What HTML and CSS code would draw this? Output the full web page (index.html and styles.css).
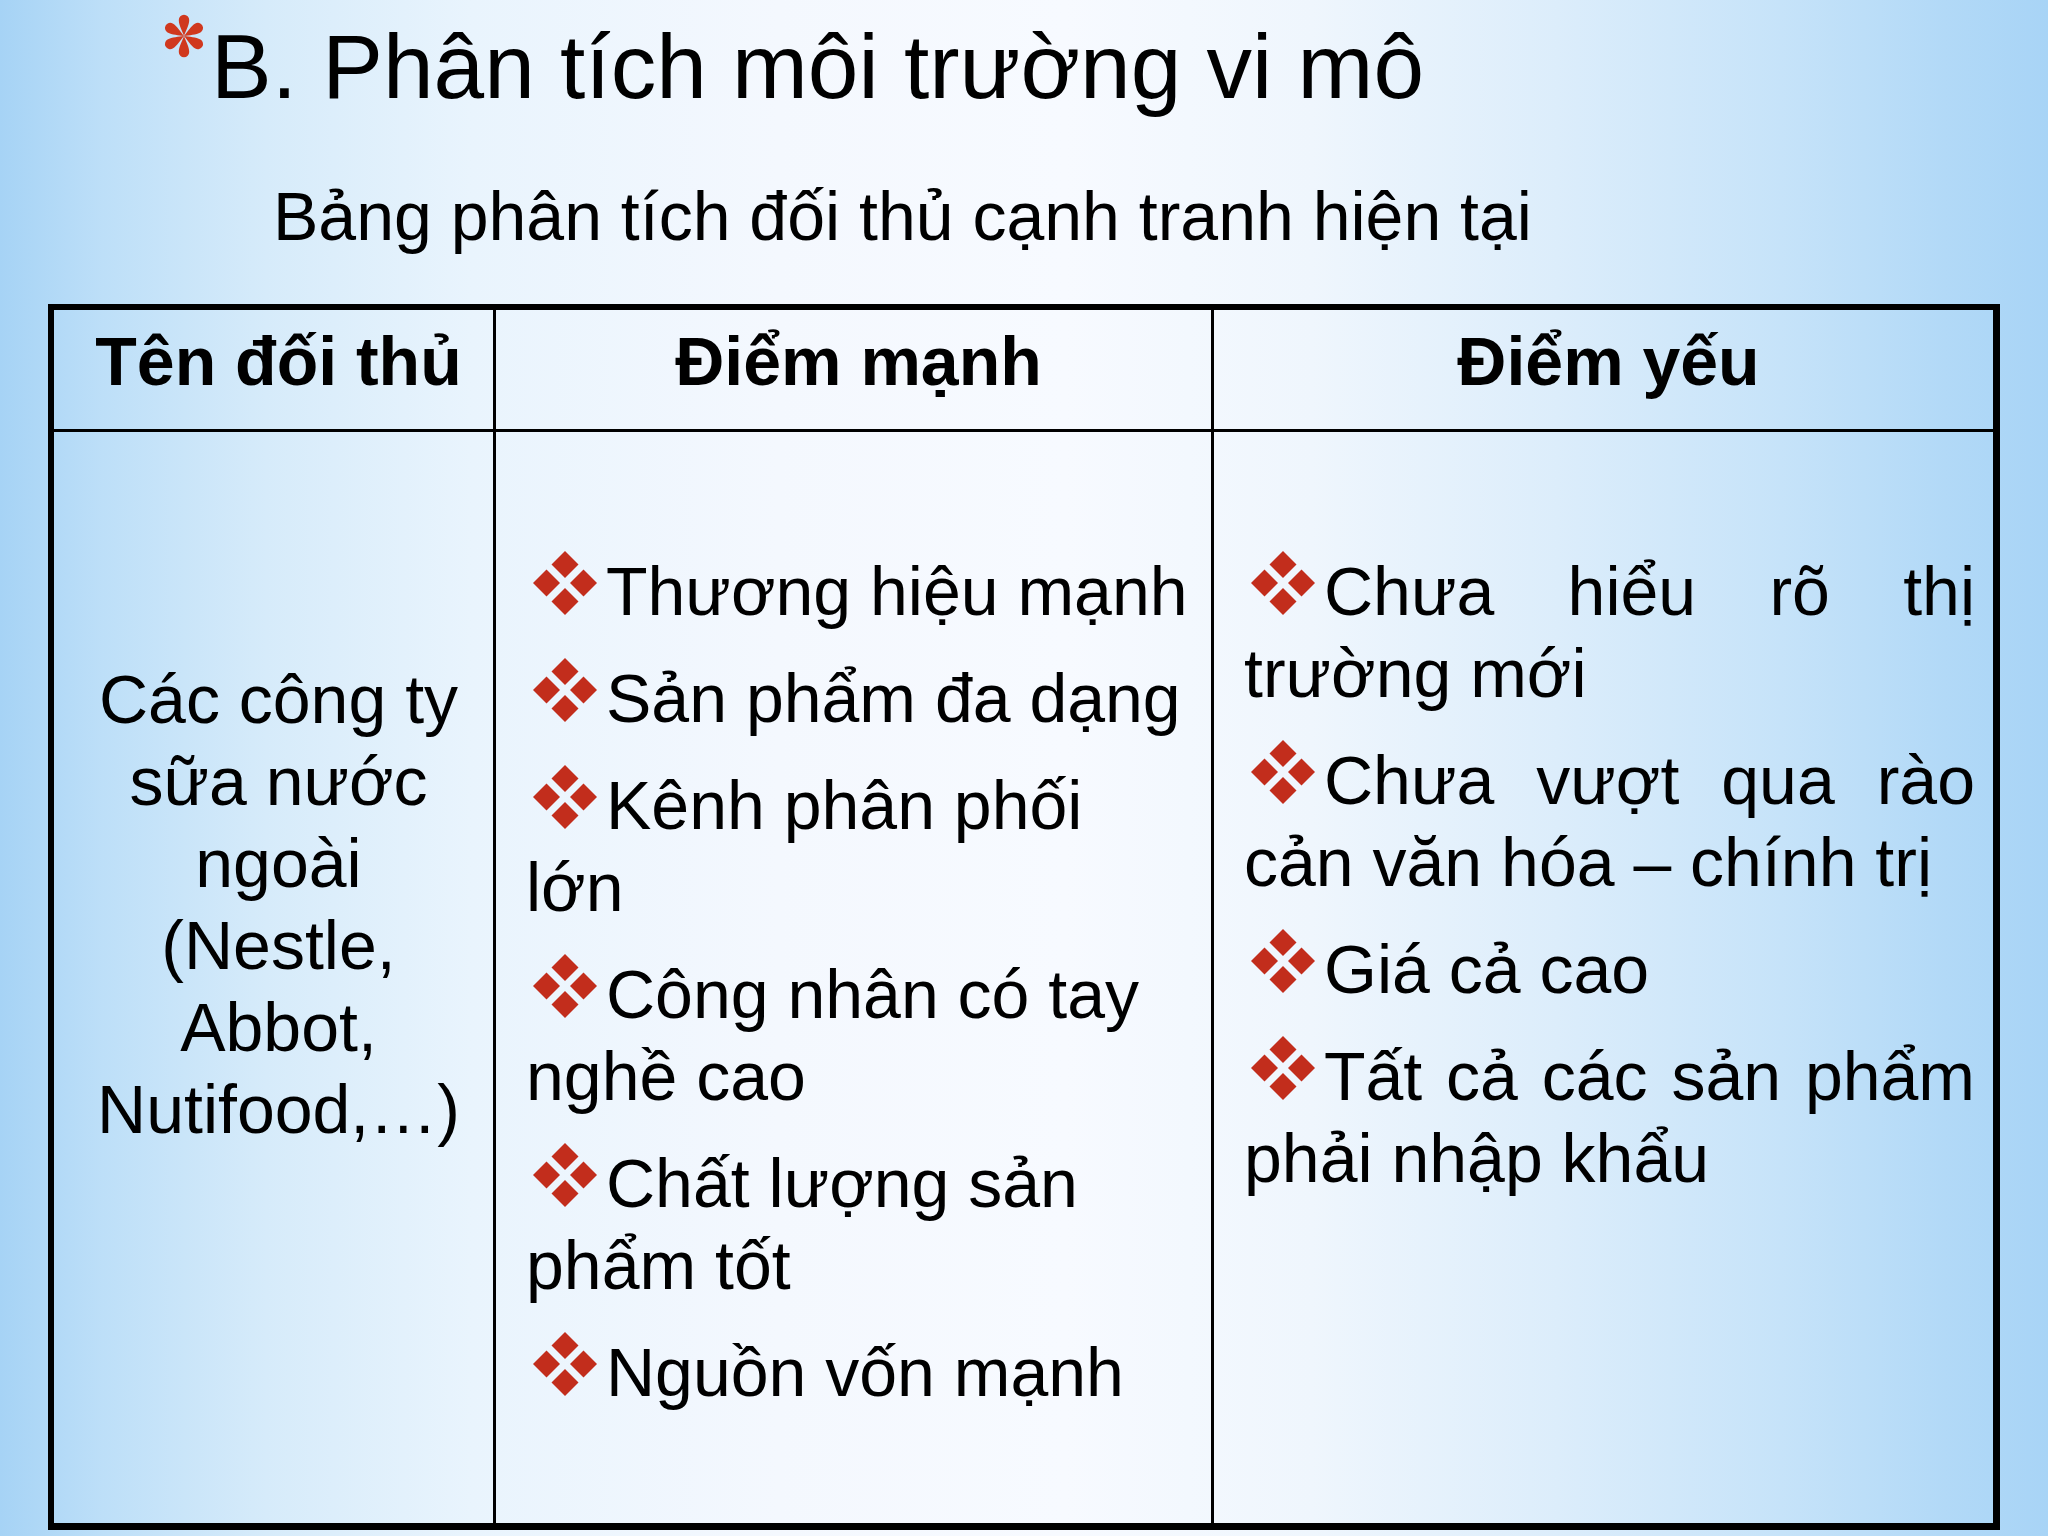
FILE: index.html
```html
<!DOCTYPE html>
<html lang="vi">
<head>
<meta charset="utf-8">
<title>B. Phân tích môi trường vi mô</title>
<link rel="stylesheet" href="styles.css">
</head>
<body>
<div class="slide">
  <h1 class="title">
    <svg class="asterisk" viewBox="-23 -22 46 44" aria-hidden="true">
      <g fill="#d0381e">
        <path d="M0,0 C-1.8,-5 -5.2,-11 -5.2,-16 A5.2,5.2 0 0 1 5.2,-16 C5.2,-11 1.8,-5 0,0 Z"/>
        <path d="M0,0 C-1.8,-5 -5.2,-11 -5.2,-16 A5.2,5.2 0 0 1 5.2,-16 C5.2,-11 1.8,-5 0,0 Z" transform="rotate(60)"/>
        <path d="M0,0 C-1.8,-5 -5.2,-11 -5.2,-16 A5.2,5.2 0 0 1 5.2,-16 C5.2,-11 1.8,-5 0,0 Z" transform="rotate(120)"/>
        <path d="M0,0 C-1.8,-5 -5.2,-11 -5.2,-16 A5.2,5.2 0 0 1 5.2,-16 C5.2,-11 1.8,-5 0,0 Z" transform="rotate(180)"/>
        <path d="M0,0 C-1.8,-5 -5.2,-11 -5.2,-16 A5.2,5.2 0 0 1 5.2,-16 C5.2,-11 1.8,-5 0,0 Z" transform="rotate(240)"/>
        <path d="M0,0 C-1.8,-5 -5.2,-11 -5.2,-16 A5.2,5.2 0 0 1 5.2,-16 C5.2,-11 1.8,-5 0,0 Z" transform="rotate(300)"/>
      </g>
    </svg>
    <span>B. Phân tích môi trường vi mô</span>
  </h1>
  <h2 class="subtitle">Bảng phân tích đối thủ cạnh tranh hiện tại</h2>

  <div class="table">
    <div class="th col1">Tên đối thủ</div>
    <div class="th col2">Điểm mạnh</div>
    <div class="th col3">Điểm yếu</div>

    <div class="td col1 td-left">Các công ty<br>sữa nước<br>ngoài<br>(Nestle,<br>Abbot,<br>Nutifood,…)</div>

    <div class="td col2 td-mid">
      <p><svg class="bullet" viewBox="0 0 64 64"><g fill="#c22d1c"><polygon points="32,0 45.5,13.5 32,27 18.5,13.5"/><polygon points="13.5,18.5 27,32 13.5,45.5 0,32"/><polygon points="50.5,18.5 64,32 50.5,45.5 37,32"/><polygon points="32,37 45.5,50.5 32,64 18.5,50.5"/></g></svg>Thương hiệu mạnh</p>
      <p><svg class="bullet" viewBox="0 0 64 64"><g fill="#c22d1c"><polygon points="32,0 45.5,13.5 32,27 18.5,13.5"/><polygon points="13.5,18.5 27,32 13.5,45.5 0,32"/><polygon points="50.5,18.5 64,32 50.5,45.5 37,32"/><polygon points="32,37 45.5,50.5 32,64 18.5,50.5"/></g></svg>Sản phẩm đa dạng</p>
      <p><svg class="bullet" viewBox="0 0 64 64"><g fill="#c22d1c"><polygon points="32,0 45.5,13.5 32,27 18.5,13.5"/><polygon points="13.5,18.5 27,32 13.5,45.5 0,32"/><polygon points="50.5,18.5 64,32 50.5,45.5 37,32"/><polygon points="32,37 45.5,50.5 32,64 18.5,50.5"/></g></svg>Kênh phân phối<br>lớn</p>
      <p><svg class="bullet" viewBox="0 0 64 64"><g fill="#c22d1c"><polygon points="32,0 45.5,13.5 32,27 18.5,13.5"/><polygon points="13.5,18.5 27,32 13.5,45.5 0,32"/><polygon points="50.5,18.5 64,32 50.5,45.5 37,32"/><polygon points="32,37 45.5,50.5 32,64 18.5,50.5"/></g></svg>Công nhân có tay<br>nghề cao</p>
      <p><svg class="bullet" viewBox="0 0 64 64"><g fill="#c22d1c"><polygon points="32,0 45.5,13.5 32,27 18.5,13.5"/><polygon points="13.5,18.5 27,32 13.5,45.5 0,32"/><polygon points="50.5,18.5 64,32 50.5,45.5 37,32"/><polygon points="32,37 45.5,50.5 32,64 18.5,50.5"/></g></svg>Chất lượng sản<br>phẩm tốt</p>
      <p><svg class="bullet" viewBox="0 0 64 64"><g fill="#c22d1c"><polygon points="32,0 45.5,13.5 32,27 18.5,13.5"/><polygon points="13.5,18.5 27,32 13.5,45.5 0,32"/><polygon points="50.5,18.5 64,32 50.5,45.5 37,32"/><polygon points="32,37 45.5,50.5 32,64 18.5,50.5"/></g></svg>Nguồn vốn mạnh</p>
    </div>

    <div class="td col3 td-right">
      <p><span class="jl"><svg class="bullet" viewBox="0 0 64 64"><g fill="#c22d1c"><polygon points="32,0 45.5,13.5 32,27 18.5,13.5"/><polygon points="13.5,18.5 27,32 13.5,45.5 0,32"/><polygon points="50.5,18.5 64,32 50.5,45.5 37,32"/><polygon points="32,37 45.5,50.5 32,64 18.5,50.5"/></g></svg>Chưa hiểu rõ thị</span>trường mới</p>
      <p><span class="jl"><svg class="bullet" viewBox="0 0 64 64"><g fill="#c22d1c"><polygon points="32,0 45.5,13.5 32,27 18.5,13.5"/><polygon points="13.5,18.5 27,32 13.5,45.5 0,32"/><polygon points="50.5,18.5 64,32 50.5,45.5 37,32"/><polygon points="32,37 45.5,50.5 32,64 18.5,50.5"/></g></svg>Chưa vượt qua rào</span>cản văn hóa – chính trị</p>
      <p><svg class="bullet" viewBox="0 0 64 64"><g fill="#c22d1c"><polygon points="32,0 45.5,13.5 32,27 18.5,13.5"/><polygon points="13.5,18.5 27,32 13.5,45.5 0,32"/><polygon points="50.5,18.5 64,32 50.5,45.5 37,32"/><polygon points="32,37 45.5,50.5 32,64 18.5,50.5"/></g></svg>Giá cả cao</p>
      <p><span class="jl"><svg class="bullet" viewBox="0 0 64 64"><g fill="#c22d1c"><polygon points="32,0 45.5,13.5 32,27 18.5,13.5"/><polygon points="13.5,18.5 27,32 13.5,45.5 0,32"/><polygon points="50.5,18.5 64,32 50.5,45.5 37,32"/><polygon points="32,37 45.5,50.5 32,64 18.5,50.5"/></g></svg>Tất cả các sản phẩm</span>phải nhập khẩu</p>
    </div>
  </div>
</div>
</body>
</html>
```

FILE: styles.css
```css
html, body {
  margin: 0;
  padding: 0;
}

body {
  width: 2048px;
  height: 1536px;
  overflow: hidden;
  font-family: "Liberation Sans", Arial, sans-serif;
  color: #000;
  background: linear-gradient(90deg,
    #a6d3f5 0%,
    #bddff8 5%,
    #d6ebfa 13%,
    #e9f4fd 23%,
    #f4f8fe 38%,
    #f7faff 52%,
    #eff6fd 64%,
    #dcedfb 76%,
    #c6e3f9 87%,
    #b2d9f7 95%,
    #a8d4f6 100%);
}

.slide {
  width: 2048px;
  height: 1536px;
}

.title {
  display: flex;
  align-items: flex-start;
  margin: 0;
  padding: 21px 0 0 161px;
  font-size: 91px;
  line-height: 91px;
  font-weight: normal;
}

.asterisk {
  flex: none;
  width: 46px;
  height: 44px;
  margin-top: -7px;
  margin-right: 4px;
}

.subtitle {
  margin: 63px 0 0 0;
  padding-left: 273px;
  font-size: 68px;
  line-height: 82px;
  font-weight: normal;
}

.table {
  margin: 47px 0 0 48px;
  width: 1952px;
  height: 1226px;
  box-sizing: border-box;
  border: 6px solid #000;
  border-right-width: 7px;
  border-bottom-width: 7px;
  display: grid;
  grid-template-columns: 442px 718px 1fr;
  grid-template-rows: 122px 1fr;
  font-size: 68px;
  line-height: 82px;
}

.col1,
.col2 {
  border-right: 3px solid #000;
}

.th {
  box-sizing: border-box;
  padding: 10px 0 0 10px;
  border-bottom: 3px solid #000;
  text-align: center;
  font-weight: bold;
}

.td {
  box-sizing: border-box;
}

.td-left {
  padding: 226px 0 0 10px;
  text-align: center;
}

.td-mid {
  padding: 118px 0 0 30px;
  white-space: nowrap;
}

.td-right {
  padding: 118px 18px 0 30px;
}

.td p {
  margin: 0;
}

.td p + p {
  margin-top: 25px;
}

.bullet {
  width: 64px;
  height: 64px;
  margin-left: 7px;
  margin-right: 9px;
  vertical-align: baseline;
}

.jl {
  display: block;
  text-align: justify;
  text-align-last: justify;
}
```
